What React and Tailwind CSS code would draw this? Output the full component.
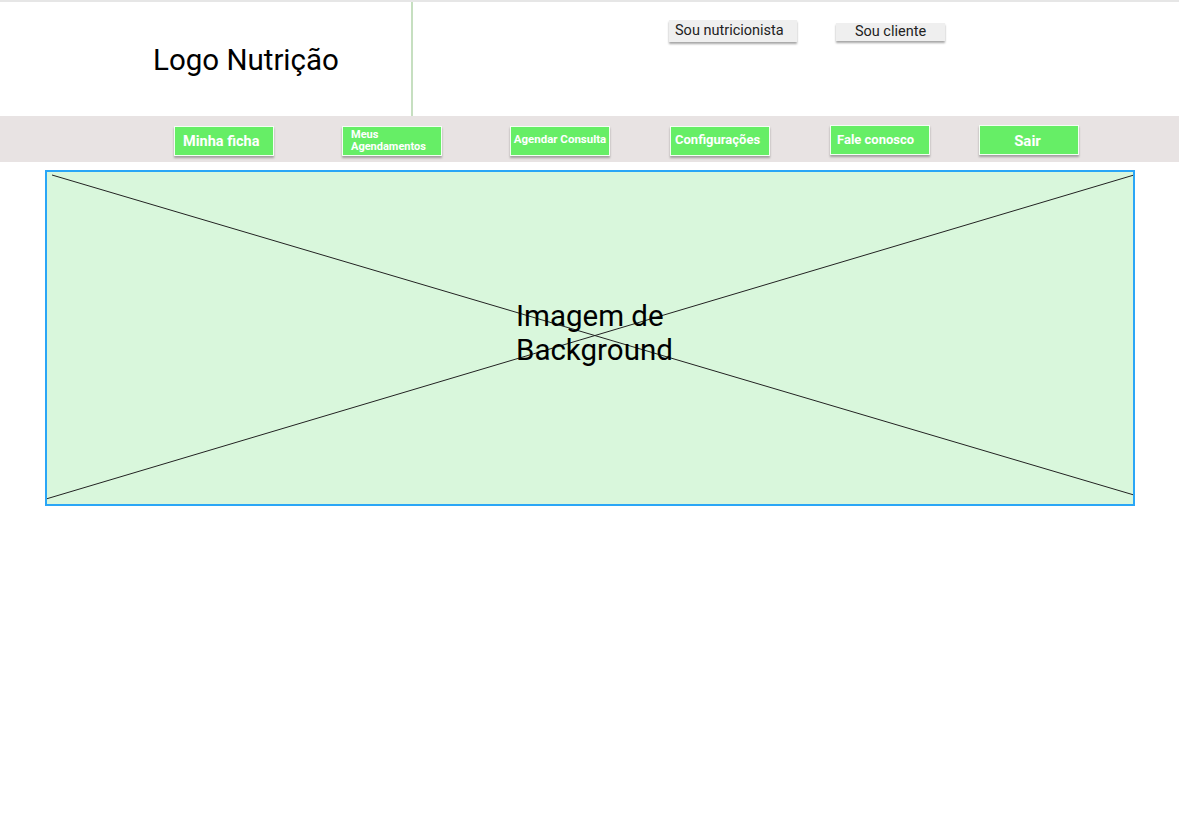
export default function App() {
  const font = { fontFamily: 'Roboto, "Noto Sans", sans-serif' };
  return (
    <div className="w-[1179px] h-[819px] bg-white overflow-hidden" style={font}>
      <div className="h-[2px] bg-[#e6e6e6]" />
      <div className="flex h-[114px]">
        <div className="w-[411px] flex items-center pl-[153px] pt-[4px]">
          <span className="text-[29.5px] text-black leading-none">Logo Nutrição</span>
        </div>
        <div className="w-[2px] bg-[#c6dfc0]" />
        <div className="flex-1 relative">
          <div className="flex items-start pl-[256px] pt-[18px]">
            <div className="w-[128px] h-[22px] bg-[#efefef] shadow-[0_2px_2px_rgba(0,0,0,0.35)] flex items-center pl-[6px] text-[14.5px] text-[#222]">Sou nutricionista</div>
            <div className="ml-[39px] mt-[3px] w-[109px] h-[18px] bg-[#efefef] shadow-[0_2px_2px_rgba(0,0,0,0.35)] flex items-center justify-center text-[14.5px] text-[#222]">Sou cliente</div>
          </div>
        </div>
      </div>
      <div className="h-[46px] bg-[#e8e3e3] relative">
        <NavBtn left={174} top={10} size="text-[14.5px]" cls="pl-[8px] pt-[2px]">Minha ficha</NavBtn>
        <NavBtn left={342} top={10} size="text-[11px] leading-[12px]" cls="pl-[8px] items-center">
          <span className="block">Meus<br />Agendamentos</span>
        </NavBtn>
        <NavBtn left={510} top={10} size="text-[11.5px]" cls="justify-center pb-[2px] whitespace-nowrap">Agendar Consulta</NavBtn>
        <NavBtn left={670} top={10} size="text-[13px]" cls="pl-[4px] pb-[2px]">Configurações</NavBtn>
        <NavBtn left={830} top={9} size="text-[13px]" cls="pl-[6px]">Fale conosco</NavBtn>
        <NavBtn left={979} top={9} size="text-[15px]" cls="justify-center pt-[3px] pr-[3px]">Sair</NavBtn>
      </div>
      <div className="pt-[8px] pl-[45px]">
        <div className="relative w-[1090px] h-[336px] border-2 border-[#2aa6f6] bg-[#d9f7dc] flex items-center justify-center">
          <svg className="absolute inset-0" width="1086" height="332" viewBox="0 0 1086 332">
            <line x1="5" y1="3" x2="1087" y2="323" stroke="#222" strokeWidth="1" />
            <line x1="-1" y1="327" x2="1087" y2="3" stroke="#222" strokeWidth="1" />
          </svg>
          <div className="relative w-[170px] text-left text-[29.5px] leading-[34px] text-black pl-[11px] pb-[10px]">Imagem de Background</div>
        </div>
      </div>
    </div>
  );
}

function NavBtn({ left, top, size, cls, children }) {
  return (
    <div
      className={`absolute w-[100px] h-[30px] bg-[#66ee66] border border-[#f4fff4] shadow-[0_2px_2px_rgba(0,0,0,0.3)] flex items-center text-white font-bold ${size} ${cls}`}
      style={{ left, top }}
    >
      {children}
    </div>
  );
}
